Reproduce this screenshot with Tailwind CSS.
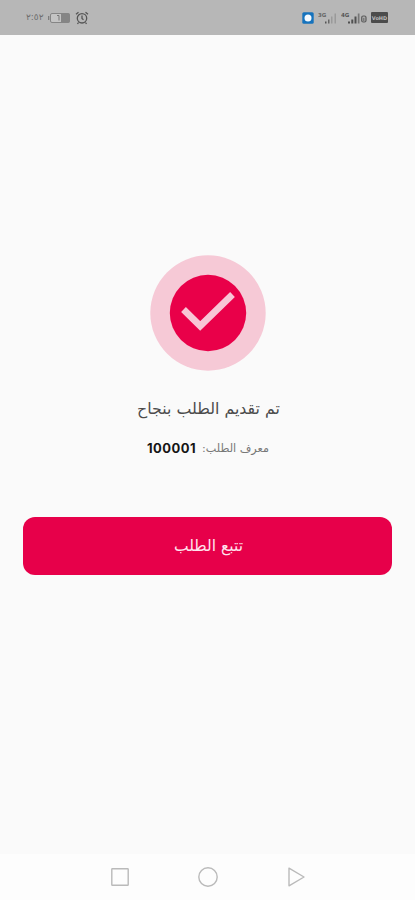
<!DOCTYPE html>
<html lang="ar">
<head>
<meta charset="utf-8">
<title>تم تقديم الطلب</title>
<script src="https://cdn.jsdelivr.net/npm/@tailwindcss/browser@4"></script>
</head>
<body class="bg-[#fafafa] font-['DejaVu_Sans',sans-serif]">
<div class="flex h-[900px] w-[415px] flex-col overflow-hidden">
  <header class="flex h-[35px] shrink-0 items-center justify-between bg-[#b7b7b7] pr-[26px] pl-[26px] text-[#555]">
    <div class="flex items-center">
      <span class="w-[22px] text-[9px] leading-none whitespace-nowrap text-[#6e6e6e]">٢:٥٢</span>
      <svg class="h-[12px] w-[22px]" viewBox="0 0 22 12"><rect x="2.5" y="1.5" width="19" height="9" rx="1.5" fill="#c4c4c4" stroke="#858585"/><rect x="13" y="1.5" width="8.5" height="9" fill="#858585"/><path d="M.7 4v4" stroke="#777" stroke-width="1.2"/><path d="M9 3.5h2v5" fill="none" stroke="#777"/></svg>
      <svg class="ml-[5px] h-[14px] w-[14px]" viewBox="0 0 14 14" fill="none" stroke="#555" stroke-width="1.3"><circle cx="7" cy="7.3" r="4.7"/><path d="M1 3.2 3.5 1.2M13 3.2 10.5 1.2M7 4.5v3l1.5 1.2M3.5 11.5 2.5 13M10.5 11.5l1 1.5"/></svg>
    </div>
    <div class="flex items-center">
      <svg class="h-[12px] w-[12px]" viewBox="0 0 12 12"><rect x=".3" y=".3" width="11.4" height="11.4" rx="1.5" fill="#1673bd"/><circle cx="6" cy="6" r="3.5" fill="#f4faff"/></svg>
      <svg class="ml-[4px] h-[14px] w-[20px]" viewBox="0 0 20 14"><text x="0" y="6" font-size="5.5" font-weight="700" fill="#666">3G</text><path d="M7 10.5h1.5v2H7z" fill="#555"/><path d="M10 8.5h1.5v4H10z" fill="#666"/><path d="M13 5.5h1.5v7H13zM16.5 2.5H18v10h-1.5z" fill="#9a9a9a"/></svg>
      <svg class="ml-[3px] h-[14px] w-[20px]" viewBox="0 0 20 14"><text x="0" y="6" font-size="5.5" font-weight="700" fill="#555">4G</text><path d="M7 10.5h2v2H7zM10.3 8.5h2v4h-2zM13.5 5.5h2v7h-2z" fill="#505050"/><path d="M16.8 2.5h1.7v10h-1.7z" fill="#777"/></svg>
      <svg class="mt-[3px] h-[8px] w-[6px]" viewBox="0 0 6 8"><rect x=".7" y="1" width="4.3" height="6" rx="1.5" fill="#aaa" stroke="#5b5b5b" stroke-width="1.2"/><path d="M2.8 3v3" stroke="#666"/></svg>
      <span class="mr-[1px] ml-[4px] flex h-[11px] w-[17px] items-center justify-center rounded-[1px] bg-[#4c4c4c] text-[5px] leading-[10px] font-bold whitespace-nowrap text-[#bbb]">VoHD</span>
    </div>
  </header>
  <main class="flex grow flex-col items-center px-[23px] pt-[220px]">
    <svg class="h-[116px] w-[116px] shrink-0" viewBox="0 0 116 116"><circle cx="58" cy="58" r="57.7" fill="#f6c9d6"/><circle cx="58" cy="58" r="38.2" fill="#e90049"/><path d="M33.5 54.5 50.2 71 82.5 39.5" fill="none" stroke="#f8c6d6" stroke-width="6.8"/></svg>
    <h1 dir="rtl" class="mt-[25px] ml-[2px] h-[26px] text-[15.8px] leading-[26px] whitespace-nowrap text-[#4b4b4b]">تم تقديم الطلب بنجاح</h1>
    <p dir="rtl" class="mt-[17px] ml-[1px] flex h-[20px] items-center gap-[6px] whitespace-nowrap text-[#777]"><span class="text-[11.2px]">معرف الطلب:</span><span class="font-['Inter',sans-serif] text-[13px] font-bold tracking-[0.45px] text-[#151515]">100001</span></p>
    <button dir="rtl" class="mt-[58px] h-[58px] w-full shrink-0 rounded-[12px] bg-[#e7004a] pt-[1px] pl-[2px] text-[15.5px] whitespace-nowrap text-[#ffe4ed]">تتبع الطلب</button>
  </main>
  <nav class="flex h-[46px] shrink-0 items-center justify-between bg-[#fdfdfd] pr-[108px] pl-[109px]">
    <svg class="h-[22px] w-[22px]" viewBox="0 0 22 22" fill="none" stroke="#bababa" stroke-width="1.4"><rect x="2.8" y="2.8" width="16.4" height="16.4" rx=".5"/></svg>
    <svg class="h-[22px] w-[22px]" viewBox="0 0 22 22" fill="none" stroke="#bababa" stroke-width="1.4"><circle cx="11" cy="11" r="9.2"/></svg>
    <svg class="h-[22px] w-[22px]" viewBox="0 0 22 22" fill="none" stroke="#bababa" stroke-width="1.4" stroke-linejoin="round"><path d="M4 2.2v17.6L19 11z"/></svg>
  </nav>
</div>
</body>
</html>
